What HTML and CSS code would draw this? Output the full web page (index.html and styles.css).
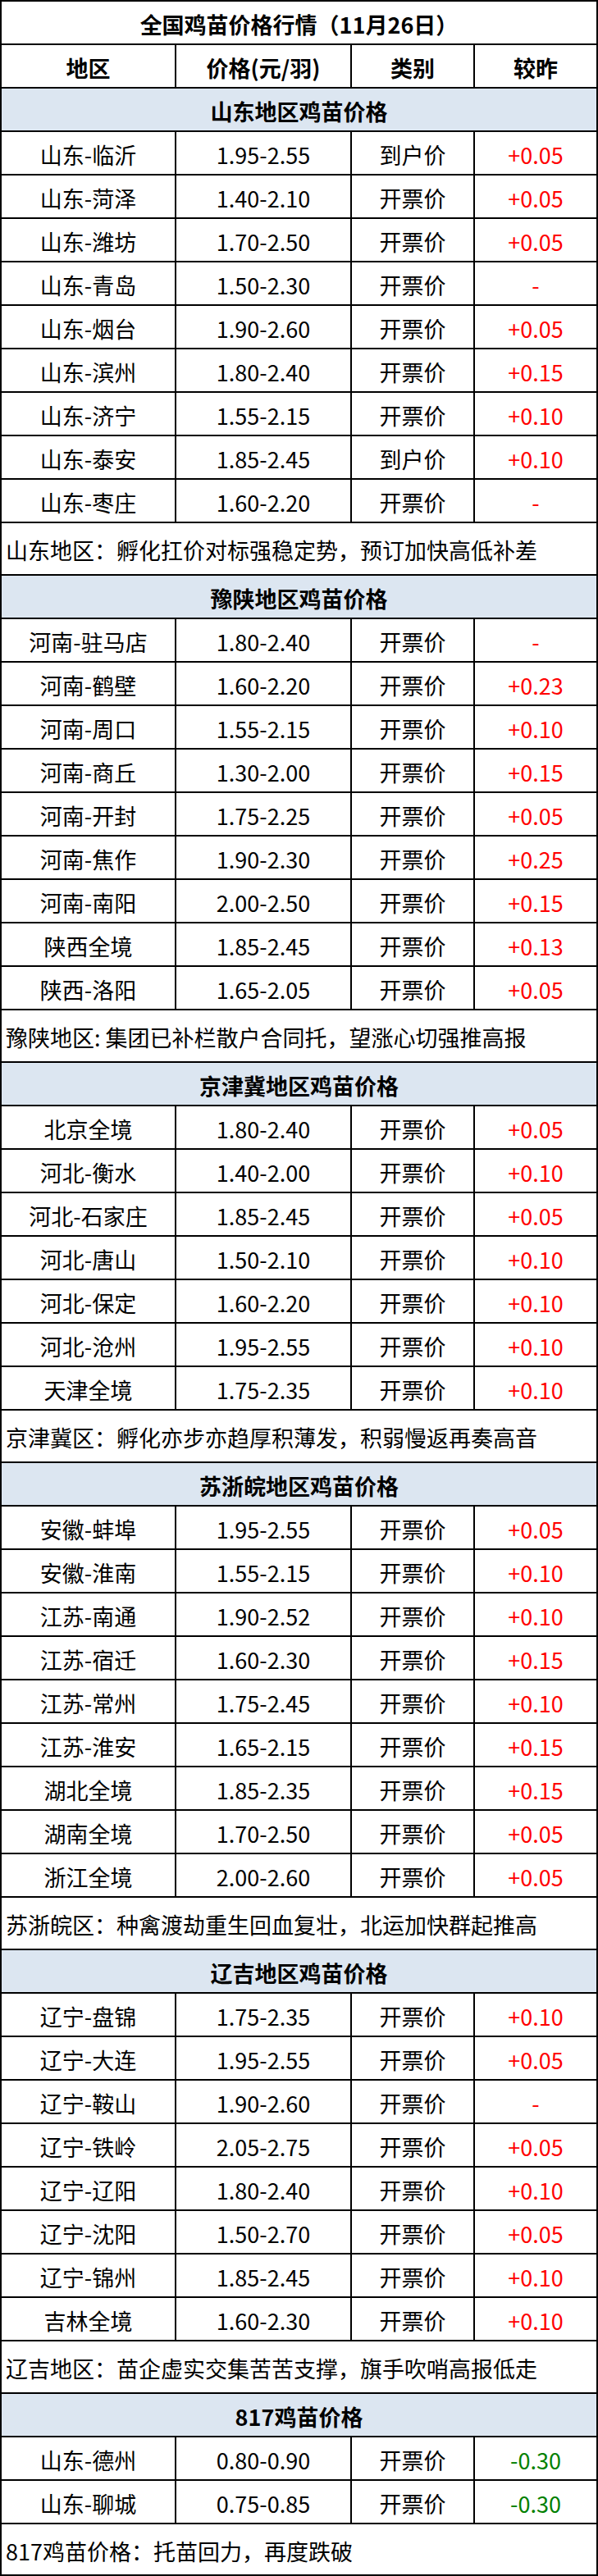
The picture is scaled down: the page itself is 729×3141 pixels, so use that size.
FILE: index.html
```html
<!DOCTYPE html>
<html lang="zh-CN">
<head>
<meta charset="utf-8">
<title>全国鸡苗价格行情</title>
<link rel="stylesheet" href="styles.css">
</head>
<body>
<div class="sheet">
  <div class="c title">全国鸡苗价格行情（11月26日）</div>
  <div class="c th">地区</div><div class="c th">价格(元/羽)</div><div class="c th">类别</div><div class="c th">较昨</div>

  <div class="c sec">山东地区鸡苗价格</div>
  <div class="c">山东-临沂</div><div class="c">1.95-2.55</div><div class="c">到户价</div><div class="c up">+0.05</div>
  <div class="c">山东-菏泽</div><div class="c">1.40-2.10</div><div class="c">开票价</div><div class="c up">+0.05</div>
  <div class="c">山东-潍坊</div><div class="c">1.70-2.50</div><div class="c">开票价</div><div class="c up">+0.05</div>
  <div class="c">山东-青岛</div><div class="c">1.50-2.30</div><div class="c">开票价</div><div class="c up">-</div>
  <div class="c">山东-烟台</div><div class="c">1.90-2.60</div><div class="c">开票价</div><div class="c up">+0.05</div>
  <div class="c">山东-滨州</div><div class="c">1.80-2.40</div><div class="c">开票价</div><div class="c up">+0.15</div>
  <div class="c">山东-济宁</div><div class="c">1.55-2.15</div><div class="c">开票价</div><div class="c up">+0.10</div>
  <div class="c">山东-泰安</div><div class="c">1.85-2.45</div><div class="c">到户价</div><div class="c up">+0.10</div>
  <div class="c">山东-枣庄</div><div class="c">1.60-2.20</div><div class="c">开票价</div><div class="c up">-</div>
  <div class="c note">山东地区：孵化扛价对标强稳定势，预订加快高低补差</div>

  <div class="c sec">豫陕地区鸡苗价格</div>
  <div class="c">河南-驻马店</div><div class="c">1.80-2.40</div><div class="c">开票价</div><div class="c up">-</div>
  <div class="c">河南-鹤壁</div><div class="c">1.60-2.20</div><div class="c">开票价</div><div class="c up">+0.23</div>
  <div class="c">河南-周口</div><div class="c">1.55-2.15</div><div class="c">开票价</div><div class="c up">+0.10</div>
  <div class="c">河南-商丘</div><div class="c">1.30-2.00</div><div class="c">开票价</div><div class="c up">+0.15</div>
  <div class="c">河南-开封</div><div class="c">1.75-2.25</div><div class="c">开票价</div><div class="c up">+0.05</div>
  <div class="c">河南-焦作</div><div class="c">1.90-2.30</div><div class="c">开票价</div><div class="c up">+0.25</div>
  <div class="c">河南-南阳</div><div class="c">2.00-2.50</div><div class="c">开票价</div><div class="c up">+0.15</div>
  <div class="c">陕西全境</div><div class="c">1.85-2.45</div><div class="c">开票价</div><div class="c up">+0.13</div>
  <div class="c">陕西-洛阳</div><div class="c">1.65-2.05</div><div class="c">开票价</div><div class="c up">+0.05</div>
  <div class="c note">豫陕地区: 集团已补栏散户合同托，望涨心切强推高报</div>

  <div class="c sec">京津冀地区鸡苗价格</div>
  <div class="c">北京全境</div><div class="c">1.80-2.40</div><div class="c">开票价</div><div class="c up">+0.05</div>
  <div class="c">河北-衡水</div><div class="c">1.40-2.00</div><div class="c">开票价</div><div class="c up">+0.10</div>
  <div class="c">河北-石家庄</div><div class="c">1.85-2.45</div><div class="c">开票价</div><div class="c up">+0.05</div>
  <div class="c">河北-唐山</div><div class="c">1.50-2.10</div><div class="c">开票价</div><div class="c up">+0.10</div>
  <div class="c">河北-保定</div><div class="c">1.60-2.20</div><div class="c">开票价</div><div class="c up">+0.10</div>
  <div class="c">河北-沧州</div><div class="c">1.95-2.55</div><div class="c">开票价</div><div class="c up">+0.10</div>
  <div class="c">天津全境</div><div class="c">1.75-2.35</div><div class="c">开票价</div><div class="c up">+0.10</div>
  <div class="c note">京津冀区：孵化亦步亦趋厚积薄发，积弱慢返再奏高音</div>

  <div class="c sec">苏浙皖地区鸡苗价格</div>
  <div class="c">安徽-蚌埠</div><div class="c">1.95-2.55</div><div class="c">开票价</div><div class="c up">+0.05</div>
  <div class="c">安徽-淮南</div><div class="c">1.55-2.15</div><div class="c">开票价</div><div class="c up">+0.10</div>
  <div class="c">江苏-南通</div><div class="c">1.90-2.52</div><div class="c">开票价</div><div class="c up">+0.10</div>
  <div class="c">江苏-宿迁</div><div class="c">1.60-2.30</div><div class="c">开票价</div><div class="c up">+0.15</div>
  <div class="c">江苏-常州</div><div class="c">1.75-2.45</div><div class="c">开票价</div><div class="c up">+0.10</div>
  <div class="c">江苏-淮安</div><div class="c">1.65-2.15</div><div class="c">开票价</div><div class="c up">+0.15</div>
  <div class="c">湖北全境</div><div class="c">1.85-2.35</div><div class="c">开票价</div><div class="c up">+0.15</div>
  <div class="c">湖南全境</div><div class="c">1.70-2.50</div><div class="c">开票价</div><div class="c up">+0.05</div>
  <div class="c">浙江全境</div><div class="c">2.00-2.60</div><div class="c">开票价</div><div class="c up">+0.05</div>
  <div class="c note">苏浙皖区：种禽渡劫重生回血复壮，北运加快群起推高</div>

  <div class="c sec">辽吉地区鸡苗价格</div>
  <div class="c">辽宁-盘锦</div><div class="c">1.75-2.35</div><div class="c">开票价</div><div class="c up">+0.10</div>
  <div class="c">辽宁-大连</div><div class="c">1.95-2.55</div><div class="c">开票价</div><div class="c up">+0.05</div>
  <div class="c">辽宁-鞍山</div><div class="c">1.90-2.60</div><div class="c">开票价</div><div class="c up">-</div>
  <div class="c">辽宁-铁岭</div><div class="c">2.05-2.75</div><div class="c">开票价</div><div class="c up">+0.05</div>
  <div class="c">辽宁-辽阳</div><div class="c">1.80-2.40</div><div class="c">开票价</div><div class="c up">+0.10</div>
  <div class="c">辽宁-沈阳</div><div class="c">1.50-2.70</div><div class="c">开票价</div><div class="c up">+0.05</div>
  <div class="c">辽宁-锦州</div><div class="c">1.85-2.45</div><div class="c">开票价</div><div class="c up">+0.10</div>
  <div class="c">吉林全境</div><div class="c">1.60-2.30</div><div class="c">开票价</div><div class="c up">+0.10</div>
  <div class="c note">辽吉地区：苗企虚实交集苦苦支撑，旗手吹哨高报低走</div>

  <div class="c sec">817鸡苗价格</div>
  <div class="c">山东-德州</div><div class="c">0.80-0.90</div><div class="c">开票价</div><div class="c down">-0.30</div>
  <div class="c">山东-聊城</div><div class="c">0.75-0.85</div><div class="c">开票价</div><div class="c down">-0.30</div>
  <div class="c note last">817鸡苗价格：托苗回力，再度跌破</div>
</div>
</body>
</html>
```

FILE: styles.css
```css
html, body {
  margin: 0;
  padding: 0;
  background: #ffffff;
}

.sheet {
  display: grid;
  grid-template-columns: 211px 212px 148px 148px;
  gap: 2px;
  padding: 2px;
  width: 729px;
  box-sizing: border-box;
  background: #000000;
  font-family: "Noto Sans CJK SC", "Microsoft YaHei", sans-serif;
  font-size: 27px;
  color: #000000;
}

.c {
  height: 51px;
  background: #ffffff;
  display: flex;
  align-items: center;
  justify-content: center;
  white-space: nowrap;
  line-height: 1;
  padding-top: 3px;
  box-sizing: border-box;
}

.title,
.sec,
.note {
  grid-column: 1 / -1;
}

.title,
.th,
.sec {
  font-weight: bold;
}

.sec {
  background: #dce6f1;
}

.note {
  height: 62px;
  justify-content: flex-start;
  padding-left: 5px;
}

.note.last {
  height: 61px;
}

.up {
  color: #ff0000;
}

.down {
  color: #008000;
}
```
